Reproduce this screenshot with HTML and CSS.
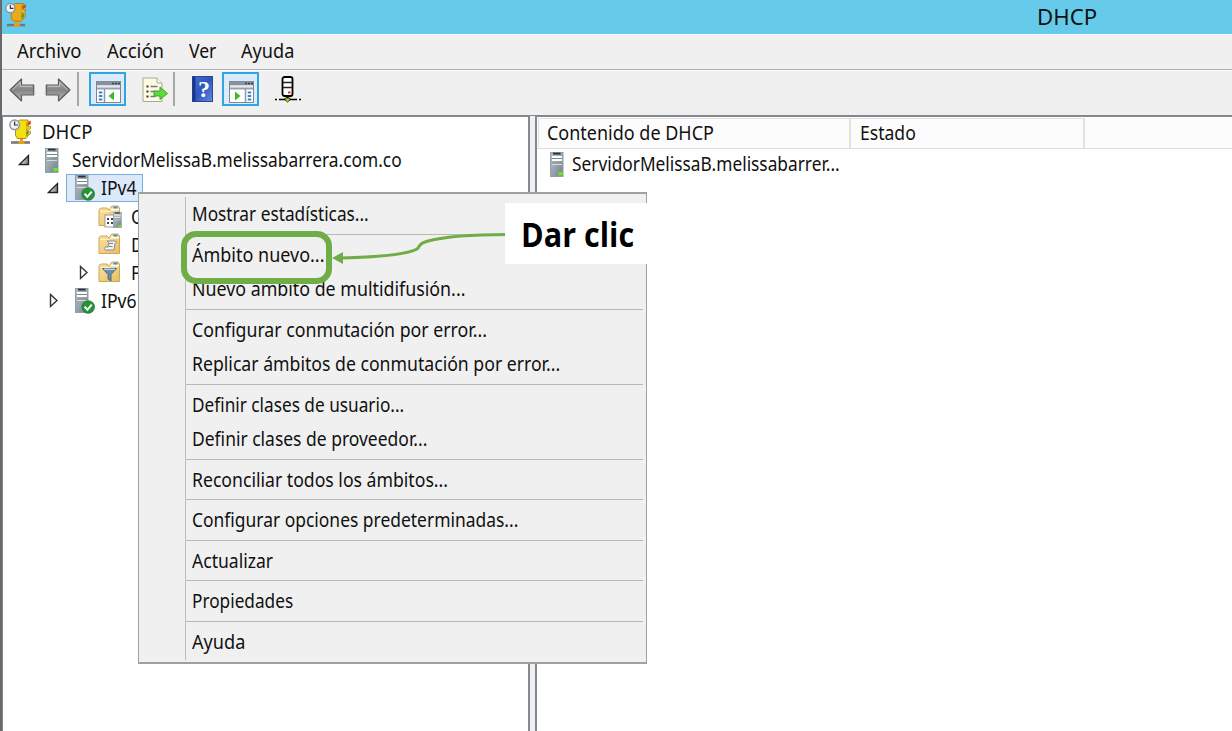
FILE: index.html
```html
<!DOCTYPE html>
<html lang="es">
<head>
<meta charset="utf-8">
<title>DHCP</title>
<link rel="stylesheet" href="styles.css">
</head>
<body>
<svg class="defs" aria-hidden="true">
  <defs>
    <linearGradient id="steel" x1="0" x2="1" y1="0" y2="1"><stop offset="0" stop-color="#b5c0c6"/><stop offset=".5" stop-color="#98a5ad"/><stop offset="1" stop-color="#6c7c86"/></linearGradient>
    <linearGradient id="folder" x1="0" x2="1" y1="0" y2="1"><stop offset="0" stop-color="#fbe3a4"/><stop offset="1" stop-color="#e9bd62"/></linearGradient>
    <linearGradient id="arrow" x1="0" x2="0" y1="0" y2="1"><stop offset="0" stop-color="#a9a9a9"/><stop offset=".5" stop-color="#858585"/><stop offset="1" stop-color="#b9b9b9"/></linearGradient>
    <linearGradient id="book" x1="0" x2="1" y1="0" y2="1"><stop offset="0" stop-color="#4a70d0"/><stop offset=".5" stop-color="#2f55bd"/><stop offset="1" stop-color="#5f8be0"/></linearGradient>
    <linearGradient id="tri" x1="0" x2="1" y1="0" y2="0"><stop offset="0" stop-color="#fff"/><stop offset="1" stop-color="#777"/></linearGradient>
    <symbol id="server" viewBox="0 0 14 25">
      <rect x=".5" y=".5" width="12.5" height="24" fill="url(#steel)" stroke="#93a0a7"/>
      <path d="M3 1.6h7.5" stroke="#26313a" stroke-width="1.800"/>
      <path d="M2 5h10M2 8h10" stroke="#fff" stroke-width="1.8"/>
      <path d="M2 6.5h10M2 11.2h10" stroke="#6d7b84" stroke-width=".8"/>
      <path d="M2 12.3h10" stroke="#e5eaec"/>
      <rect x="8.5" y="20" width="4" height="3.5" fill="#6bea18"/>
    </symbol>
    <symbol id="server-ok" viewBox="0 0 20 26">
      <use href="#server" width="14" height="25"/>
      <circle cx="13.2" cy="19" r="6.3" fill="#279238" stroke="#1b7229" stroke-width=".7"/>
      <path d="M9.6 18.7l2.8 3.1 4.3-5.2" fill="none" stroke="#fff" stroke-width="2"/>
    </symbol>
    <symbol id="dir" viewBox="0 0 24 24">
      <path d="M1 20.5V4.5l2-1.5h6l2 2h1V3l2-2h6l1.500 2v17.500z" fill="url(#folder)" stroke="#d4a64d"/>
      <path d="M12.500 4.500h8.500" stroke="#fff" stroke-width="2"/>
      <path d="M15.500 2.500h4" stroke="#3994d8" stroke-width="2"/>
      <path d="M2 6.500h9l2-1" fill="none" stroke="#fff1c8"/>
    </symbol>
    <symbol id="tower" viewBox="0 0 23 26">
      <path d="M2 23.500h19" stroke="#777" stroke-width="2.600"/>
      <path class="t-base" d="M11 19.500h3v2.500h1.500v3h-6v-3H11z"/>
      <path class="t-body" d="M8 3l2.500-2h8.500v16l-2 2.500H8.500l-2-3V8z" stroke-width=".8"/>
      <path class="t-body" d="M17.500 3.500l4-1.500v3l-4 2zM17.500 8.500l4-1.500v3l-4 2zM17.500 13.500l4-1.500v3l-4 2z" stroke-width=".6"/>
      <path class="lamp-top" d="M18.500 4l3-1.700v2.500l-3 1.700z"/>
      <circle class="lamp-mid" cx="18.500" cy="9" r="1.400"/>
      <circle class="lamp-low" cx="18.500" cy="14" r="1.400"/>
      <circle cx="5.600" cy="5.800" r="4.800" fill="#eef3f7" stroke="#8594a0" stroke-width="1.400"/>
      <path d="M5.600 2.500V6h3.300" fill="none" stroke="#333" stroke-width="1.200"/>
    </symbol>
    <symbol id="back" viewBox="0 0 26 24">
      <path d="M1 12L12.500 1v6h12.200v10H12.500v6z" fill="url(#arrow)" stroke="#5d5d5d" stroke-width="1.200" stroke-linejoin="round"/>
      <path d="M3.200 12l8-7.700V8.300h12.200" fill="none" stroke="#c8c8c8"/>
    </symbol>
    <symbol id="console" viewBox="0 0 25 22">
      <rect x=".5" y=".5" width="24" height="21" fill="#fff" stroke="#7d8791"/>
      <path d="M1 2.500h23" stroke="#87929e" stroke-width="4"/>
      <path d="M1 5.500h23" stroke="#e6eaee" stroke-width="2"/>
      <path d="M1 7.500h23" stroke="#98a2ad" stroke-width="2"/>
      <path d="M8.500 8v13" stroke="#8d99a5" stroke-width="1.500"/>
      <path d="M2.800 11.500h3.500M2.800 15h3.500M2.800 18.500h3.500" stroke="#3d80c7" stroke-width="1.800"/>
    </symbol>
    <symbol id="open" viewBox="0 0 13 12"><path d="M1.500 10.500h9V1.500z" fill="url(#tri)" stroke="#222" stroke-width="1.300"/></symbol>
    <symbol id="closed" viewBox="0 0 10 16"><path d="M1.500 1.500v12L8 7.500z" fill="#fff" stroke="#333" stroke-width="1.400"/></symbol>
  </defs>
</svg>

<div class="window">
  <header class="titlebar">
    <svg class="app-icon" width="22" height="26"><use href="#tower"/></svg>
    <span class="title">DHCP</span>
  </header>

  <nav class="menubar">
    <span class="m1">Archivo</span><span class="m2">Acción</span><span class="m3">Ver</span><span class="m4">Ayuda</span>
  </nav>

  <div class="toolbar">
    <svg class="tb-back" width="26" height="24"><use href="#back"/></svg>
    <svg class="tb-fwd" width="26" height="24"><use href="#back"/></svg>
    <i class="divider"></i>
    <span class="pressed"><svg width="25" height="22" viewBox="0 0 25 22"><use href="#console"/><path d="M16 2.500h2m1 0h2m1 0h2" stroke="#39444f" stroke-width="1.600"/><path d="M18 10.500v9l-5.500-4.500z" fill="#3dbb22"/></svg></span>
    <svg class="tb-export" width="26" height="26" viewBox="0 0 26 26">
      <path d="M1 1h14l5 5v18.500H1z" fill="#fffbe0" stroke="#aaa79a"/>
      <path d="M15 1v5h5" fill="#fff" stroke="#aaa79a"/>
      <path d="M4.500 9.500h2M4.500 14.500h2M4.500 19.500h2" stroke="#333" stroke-width="1.800"/>
      <path d="M8.500 9.500h7M8.500 14.500h5M8.500 19.500h5" stroke="#77718f" stroke-width="1.500"/>
      <path d="M12 14h6v-4l7.500 6.500-7.500 6v-3.500h-6z" fill="#62d63f" stroke="#37aa22"/>
    </svg>
    <i class="divider after-export"></i>
    <svg class="tb-help" width="21" height="26" viewBox="0 0 21 26">
      <rect x=".5" y=".5" width="20" height="25" fill="url(#book)" stroke="#2c459b"/>
      <path d="M2 1v24" stroke="#1d3689" stroke-width="3"/>
      <text x="12" y="21" class="help-mark">?</text>
    </svg>
    <span class="pressed next"><svg width="25" height="22" viewBox="0 0 25 22"><use href="#console" transform="translate(25 0) scale(-1 1)"/><path d="M16 2.500h2m1 0h2m1 0h2" stroke="#39444f" stroke-width="1.600"/><path d="M6 10.500v9l5.500-4.500z" fill="#3dbb22"/></svg></span>
    <svg class="tb-net" width="26" height="28" viewBox="0 0 26 28">
      <rect x="7.500" y="2" width="10" height="19" rx="2" fill="#fff" stroke="#000" stroke-width="1.800"/>
      <path d="M8 7.500h9M8 12.500h9" stroke="#222" stroke-width="1.300"/>
      <path d="M13 17.500h2.500" stroke="#f22" stroke-width="2"/>
      <path d="M12.500 21v3" stroke="#000" stroke-width="2"/>
      <path d="M0 24.500h2m2 0h18m2 0h2" stroke="#000" stroke-width="1.500"/>
      <path d="M10 23h5v2l-2.500 2-2.500-2z" fill="#c9c900" stroke="#000" stroke-width=".7"/>
    </svg>
  </div>

  <main class="panes">
    <section class="tree">
      <div class="row root"><svg class="tower-yellow" width="23" height="26"><use href="#tower"/></svg><span class="w-dhcp">DHCP</span></div>
      <div class="row host"><svg class="tw" width="13" height="12"><use href="#open"/></svg><svg class="srv" width="14" height="25"><use href="#server"/></svg><span class="w-host">ServidorMelissaB.melissabarrera.com.co</span></div>
      <div class="row ip"><svg class="tw" width="13" height="12"><use href="#open"/></svg><div class="selected"><svg width="20" height="26"><use href="#server-ok"/></svg><span class="w-ip">IPv4</span></div></div>
      <div class="row folder"><svg width="24" height="24" viewBox="0 0 24 24"><use href="#dir"/><rect x="7" y="10" width="9" height="12" fill="#fff" stroke="#999"/><path d="M9 14h2m2 0h2M9 18h2m2 0h2" stroke="#445" stroke-width="2"/><use href="#server" x="15" y="7" width="9" height="16"/></svg><span class="clip">O</span></div>
      <div class="row folder"><svg width="24" height="24" viewBox="0 0 24 24"><use href="#dir"/><path d="M9 8h8c2 0 2 2.500 0 2.500l-1 6.500H8c-2 0-2-3 0-3h2l1-4z" fill="#f1f2f4" stroke="#8b8c91"/><path d="M11 10.500h4m-4.500 3h4" stroke="#85868d"/></svg><span class="clip">D</span></div>
      <div class="row folder"><svg class="tw" width="10" height="16"><use href="#closed"/></svg><svg width="24" height="24" viewBox="0 0 24 24"><use href="#dir"/><path d="M4.500 7.500h14L13 13.500V20l-3-2v-4.500z" fill="#688caa" stroke="#486c89"/><path d="M6 8.300h11" stroke="#b9d4e7" stroke-width="1.500"/></svg><span class="clip">F</span></div>
      <div class="row ip six"><svg class="tw" width="10" height="16"><use href="#closed"/></svg><div class="plain"><svg width="20" height="26"><use href="#server-ok"/></svg><span class="w-ip">IPv6</span></div></div>
    </section>
    <section class="content">
      <div class="columns"><div class="col name"><span class="w-cont">Contenido de DHCP</span></div><div class="col state"><span class="w-est">Estado</span></div></div>
      <div class="entry"><svg width="14" height="25"><use href="#server"/></svg><span class="w-entry">ServidorMelissaB.melissabarrer...</span></div>
    </section>
  </main>

  <div class="context">
    <ul>
      <li><span class="c1">Mostrar estadísticas...</span></li>
      <li class="sep"></li>
      <li><span class="c2">Ámbito nuevo...</span></li>
      <li><span class="c3">Nuevo ámbito de multidifusión...</span></li>
      <li class="sep"></li>
      <li><span class="c4">Configurar conmutación por error...</span></li>
      <li><span class="c5">Replicar ámbitos de conmutación por error...</span></li>
      <li class="sep"></li>
      <li><span class="c6">Definir clases de usuario...</span></li>
      <li><span class="c7">Definir clases de proveedor...</span></li>
      <li class="sep"></li>
      <li><span class="c8">Reconciliar todos los ámbitos...</span></li>
      <li class="sep"></li>
      <li><span class="c9">Configurar opciones predeterminadas...</span></li>
      <li class="sep"></li>
      <li><span class="c10">Actualizar</span></li>
      <li class="sep"></li>
      <li><span class="c11">Propiedades</span></li>
      <li class="sep"></li>
      <li><span class="c12">Ayuda</span></li>
    </ul>
  </div>

  <div class="highlight"></div>
  <svg class="pointer" width="180" height="40" viewBox="0 0 180 40">
    <path d="M10 28C48 27 77 24 86 19C90 16 86 14 97 11C116 6 145 4.500 176 4.500" fill="none" stroke="#70ad47" stroke-width="3"/>
    <path d="M1 28l11-6v12z" fill="#70ad47"/>
  </svg>
  <div class="callout"><span>Dar clic</span></div>
</div>
</body>
</html>
```
FILE: styles.css
```css
* { box-sizing: border-box; }
body { margin: 0; overflow: hidden; font: 19.5px/28px "Noto Sans", "Open Sans", sans-serif; color: #111; }
span { white-space: nowrap; }
svg { display: block; flex: none; }
.defs { position: absolute; width: 0; height: 0; }
.window { position: relative; width: 1232px; height: 731px; display: flex; flex-direction: column; background: #f0f0f0; border-left: 2px solid #696969; overflow: hidden; }

.titlebar { height: 34px; flex: none; display: flex; background: #66cbea; padding: 2px 0 0 3px; }
.title { margin: 0 0 0 1010px; font-size: 22px; transform: scaleX(1.01); transform-origin: 0 0; }
.t-body { fill: #eba91d; stroke: #a97008; }
.t-base { fill: #e2a21a; }
.lamp-top { fill: #e5301f; }
.lamp-mid { fill: #d9c21c; }
.lamp-low { fill: #3f9a4c; }
.tower-yellow .t-body { fill: #f1df12; }
.tower-yellow { --body: #f1df12; }
.t-body { fill: var(--body, #eba91d); }

.menubar { height: 36px; flex: none; border-top: 1px solid #fafafa; border-bottom: 1px solid #adb0b5; display: grid; grid-template-columns: 90px 82px 52px 80px; padding: 2px 0 0 15px; }
.menubar span, .row span, .entry span, .col span, .context span { display: inline-block; width: max-content; transform: scaleX(.9); transform-origin: 0 50%; }
.menubar .m1 { transform: scaleX(.944); }
.menubar .m2 { transform: scaleX(.95); }
.menubar .m4 { transform: scaleX(.93); }

.toolbar { height: 46px; flex: none; border-top: 1px solid #fbfbfb; border-bottom: 1px solid #828790; display: flex; align-items: flex-start; padding: 1px 0 0 7px; }
.tb-back, .tb-fwd { margin-top: 6px; }
.tb-fwd { transform: scaleX(-1); margin-left: 10px; }
.divider { width: 2px; height: 34px; background: #a8a8a8; margin-left: 6px; }
.pressed { width: 37px; height: 34px; margin-left: 10px; padding: 7px 0 0 5px; border: 2px solid #30a5df; background: #dcebfc; }
.tb-export { margin: 5px 0 0 16px; }
.after-export { margin-left: 5px; }
.tb-help { margin: 4px 0 0 17px; }
.help-mark { font: bold 24px "Liberation Serif", serif; fill: #fff; text-anchor: middle; }
.next { margin-left: 9px; }
.tb-net { margin: 3px 0 0 16px; }

.panes { flex: 1; display: flex; gap: 5px; min-height: 0; }
.tree { width: 528px; background: #fff; border: solid #828790; border-width: 1px 2px 0 1px; padding-top: 1px; }
.row { height: 28.2px; display: flex; align-items: center; }
.root { padding-left: 6px; }
.root span { margin-left: 10px; }
.row .w-dhcp { transform: scaleX(.955); }
.host { padding-left: 15px; }
.host .srv { margin: 0 13px 0 14px; }
.row .w-host { transform: scaleX(.889); }
.ip { padding-left: 44px; }
.selected, .plain { display: flex; align-items: center; height: 28px; padding-left: 9px; margin-left: 6px; }
.selected { width: 77px; border: 1px solid #79abe2; background: #dbe9fb; padding-left: 8px; }
.selected span, .plain span { margin-left: 6px; }
.six .tw { margin-left: 2px; }
.six .plain { margin-left: 7px; }
.folder { padding-left: 95px; }
.row .clip { margin-left: 9px; }
.folder .tw { margin: 0 9px 0 -19px; }

.content { flex: 1; background: #fff; border: solid #828790; border-width: 1px 0 0 2px; padding-top: 1px; }
.columns { height: 31px; display: flex; background: #fcfcfc; border-bottom: 1px solid #dedede; }
.col { border: 1px solid #e2e2e2; border-bottom: 0; padding-left: 8px; }
.name { width: 313px; border-right-width: 2px; margin-left: 1px; }
.state { width: 234px; padding-left: 9px; border-left: 0; border-right-width: 2px; }
.col .w-cont { transform: scaleX(.922); }
.entry { height: 30px; display: flex; align-items: center; gap: 8px; padding-left: 13px; }
.entry .w-entry { transform: scaleX(.887); }

.context { position: absolute; left: 136px; top: 192px; width: 509px; height: 472px; background: #f0f0f0; border: 2px solid #a0a0a0; border-width: 2px 1.500px 2px 1px; padding: 3px 3px 3px 46px; }
.context ul { margin: 0; padding: 0; height: 463px; list-style: none; border-left: 1px solid #bcbcbc; }
.context li { height: 34.500px; display: flex; align-items: center; padding-left: 6px; }
.context .sep { height: 6px; padding: 0 0 1px; }
.sep::before { content: ""; width: 100%; border-top: 1px solid #b8b8b8; }
.context .c1 { transform: scaleX(.885); }
.context .c2 { transform: scaleX(.922); }
.context .c3 { transform: scaleX(.913); }
.context .c4 { transform: scaleX(.909); }
.context .c5 { transform: scaleX(.905); }
.context .c6 { transform: scaleX(.883); }
.context .c7 { transform: scaleX(.896); }
.context .c8 { transform: scaleX(.904); }
.context .c9 { transform: scaleX(.894); }
.context .c11 { transform: scaleX(.883); }
.context .c12 { transform: scaleX(.93); }

.highlight { position: absolute; left: 179px; top: 231px; width: 151px; height: 53px; border: 6px solid #70ad47; border-radius: 15px; }
.pointer { position: absolute; left: 329px; top: 230px; }
.callout { position: absolute; left: 503px; top: 203px; width: 147px; height: 61px; background: #fff; color: #000; padding: 8px 0 0 16px; font: bold 34px/46px "Open Sans", sans-serif; }
.callout span { display: inline-block; transform: scaleX(.9); transform-origin: 0 50%; }
```
